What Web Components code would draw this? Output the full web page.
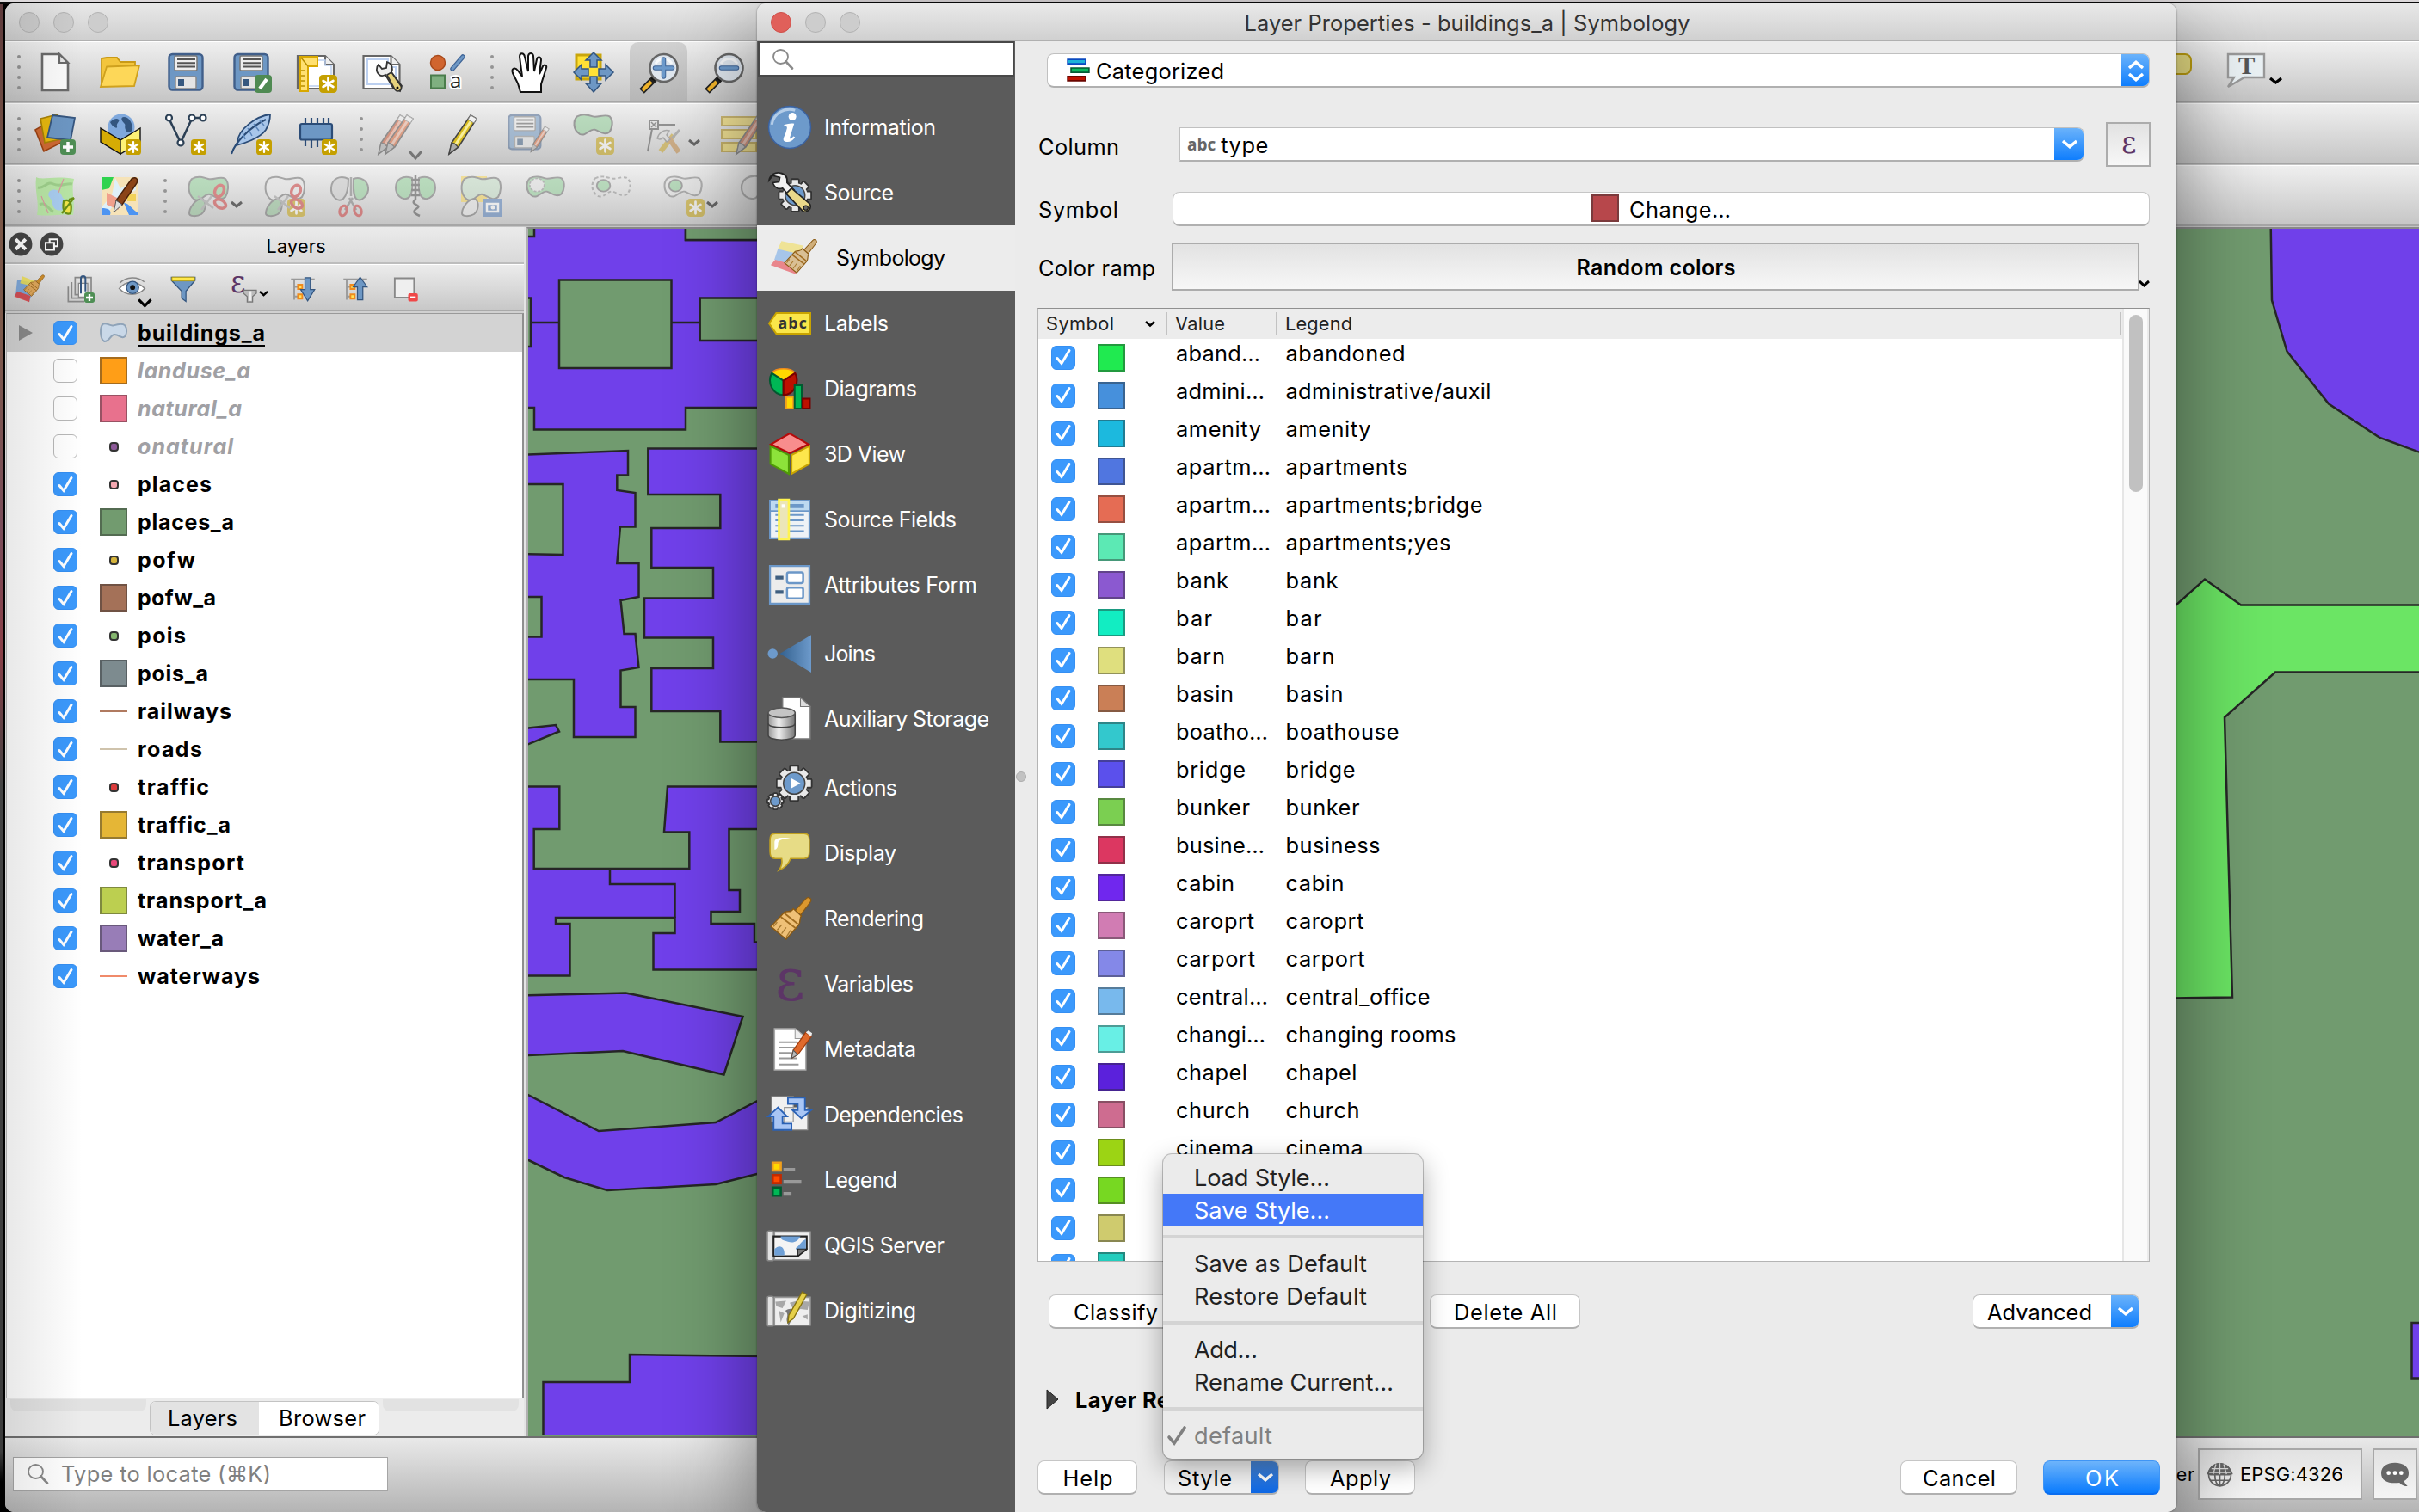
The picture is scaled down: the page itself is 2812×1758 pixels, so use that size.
<!DOCTYPE html>
<html lang="en">
<head>
<meta charset="utf-8">
<title>Layer Properties - buildings_a | Symbology</title>
<style>
html,body{margin:0;width:2812px;height:1758px;overflow:hidden}
body{font-family:Inter,"Noto Sans",sans-serif;font-size:25.4px;color:#000;
background:linear-gradient(#dcd8da 0 2px,#0a0a0a 2px 5px,transparent 5px),linear-gradient(to right,transparent 4px,#000 4px),linear-gradient(#5d3a3c,#7a5646 12%,#7d5a4c 22%,#7b4d5a 35%,#8a4048 43%,#444 52%,#3c3c3c 96%,#000 98%)}
</style>
</head>
<body>
<qgis-window></qgis-window>
<properties-dialog></properties-dialog>
<script>
const BLOB='M5 4C12 0 18 2 24 4S38 0 44 4C49 10 47 20 44 25 38 31 32 24 26 22S16 32 8 28C0 22 0 10 5 4Z';
const star=(s=18)=>`<g transform="translate(${48-s} ${48-s}) scale(${s/20})"><rect width="20" height="20" rx="4" fill="#c5a000"/><path d="M10 3.5v13M4.4 6.7l11.2 6.6M15.6 6.7 4.4 13.300" stroke="#fff" stroke-width="2.600" stroke-linecap="round"/></g>`;
const plus='<rect x="30" y="30" width="18" height="18" rx="4" fill="#4f8f55"/><path d="M39 33v12M33 39h12" stroke="#fff" stroke-width="3.500"/>';
const floppy=`<rect x="4.500" y="3" width="39" height="41.500" rx="4" fill="#6d97c4" stroke="#415f8a" stroke-width="2.400"/><rect x="11" y="5" width="26" height="17" rx="1.500" fill="#efefef" stroke="#777" stroke-width="1.500"/><path d="M14 9h21M14 13.300h21M14 17.500h21" stroke="#555" stroke-width="2"/><rect x="12" y="29" width="24" height="14" rx="1.500" fill="#e4e4e4" stroke="#888" stroke-width="1.500"/><path d="M15 32h7v8h-7z" fill="#37587f"/>`;
const pencil=(a,b)=>`<path d="M33 2l7 4-21 33-11 8 3-13z" fill="${a}" stroke="#444" stroke-width="1.600"/><path d="M36.500 4 15 37" stroke="${b}" stroke-width="3"/><path d="M11 34l3.500 1 4 4L8 47z" fill="#aaa" stroke="#444" stroke-width="1.200"/><path d="M33 2l7 4-3 5-7-4z" fill="#f2f2f2" stroke="#888"/>`;
const lens=`<path d="M19 31 4 46" stroke="#222" stroke-width="8"/><path d="M15 35 5 45" stroke="#f0b32a" stroke-width="4.500"/><path d="M21 27l-4 6" stroke="#111" stroke-width="5"/><circle cx="29.500" cy="19" r="16" fill="#dfe6ee" stroke="#666" stroke-width="2.600"/><path d="M20 14a11 11 0 0 1 19 0" stroke="#fff" stroke-width="3" fill="none" opacity=".7"/>`;
const wrench=`<path d="M20 15c-3 3-3 9 1 12 2 1.500 5 1 7 0l9 15 8 4 2-6-12-16c2-4 1-10-5-12l-1 7-5 1z" fill="#eee" stroke="#333" stroke-width="1.800"/><path d="M30 27l5-3 11 16c2 5-4 8-7 4z" fill="#e6d27c" stroke="#333" stroke-width="1.600"/><circle cx="42" cy="42" r="1.500"/>`;
const sciss=`<path d="M12 24l18 14M28 24 16 40" stroke="#999" stroke-width="2.500"/><ellipse cx="37" cy="18" rx="5" ry="7" transform="rotate(25 37 18)" fill="none" stroke="#c33" stroke-width="3.500"/><ellipse cx="38" cy="33" rx="7" ry="4.500" transform="rotate(30 38 33)" fill="none" stroke="#c33" stroke-width="3.500"/>`;
const leaf=f=>`<path d="M17 27c6 4 4 14-1 18-5 3-14 3-14-1 0-6 7-17 15-17z" fill="${f}" stroke="#666" stroke-width="2"/>`;
const gear=(cx,cy,r,h)=>{let d='';for(let i=0;i<8;i++)d+=`<rect x="${cx-r*.24}" y="${cy-r}" width="${r*.48}" height="${r*2}" rx="1" transform="rotate(${i*45} ${cx} ${cy})"/>`;return `<g fill="#e8e8e8" stroke="#333" stroke-width="1.600">${d}</g><circle cx="${cx}" cy="${cy}" r="${r*.76}" fill="#e8e8e8"/><circle cx="${cx}" cy="${cy}" r="${h}" fill="#6d9acb" stroke="#444" stroke-width="1.500"/>`};
const brush=(a,b)=>`<path d="M46 1c3 1 2 4 0 6L36 20l-6-5L42 2c1-1 3-2 4-1z" fill="${b}" stroke="#8a5a14" stroke-width="1.200"/><path d="M18 17c5-2 7 1 10-4l9 8c-3 3 0 6-3 10L20 47 3 33z" fill="${a}" stroke="#8a5a14" stroke-width="1.400"/><path d="M14 22l17 13M18 18l15 12" stroke="#a06c20" stroke-width="1.800"/><path d="M10 28 6 33M15 31l-5 6M20 34l-5 7M25 37l-5 8" stroke="#a97b33" stroke-width="1.300"/>`;
const map='<path d="M7 9h40v31H7z" fill="#eee" stroke="#999" stroke-width="1.500"/><rect x="-1" y="8" width="7" height="33" rx="2" fill="#e2e2e2" stroke="#888" stroke-width="1.500"/>';
const swoosh='<path d="M3 8 35 14 24 46 0 36z" fill="#6f9fd8"/><path d="M12 2 38 12 34 20 8 14z" fill="#f0e050"/><path d="M3 28 26 36 24 47 -2 37z" fill="#e04040"/>';
const tree='<path d="M2 6h44M8 6v38M8 20h10M8 38h10" stroke="#999" stroke-width="3" fill="none"/><path d="M15 16h8v8h-8zM15 34h8v8h-8z" fill="#ffe45c" stroke="#f08a1c" stroke-width="3"/>';
const ICONS={
newdoc:'<path d="M9 3h20l10 10v32H9z" fill="#fcfcfc" stroke="#6b6b6b" stroke-width="2.600"/><path d="M29 3v10h10z" fill="#e8e8e8" stroke="#6b6b6b" stroke-width="2.200"/>',
open:'<path d="M2 40V8l6-1h12l4 5h17v9H8z" fill="#f3c53c" stroke="#c99a17" stroke-width="1.800"/><path d="M8 17.500 46 16l-6 24-39 1z" fill="#fdd758" stroke="#cfa11e" stroke-width="1.800"/>',
save:floppy,
saveas:floppy+'<rect x="28" y="27" width="20" height="21" rx="4" fill="#4f8a52"/><path d="M42 32 34 43" stroke="#fff" stroke-width="4"/>',
newlayout:'<path d="M2 5h32l10 10v28H2z" fill="#fff" stroke="#666" stroke-width="2.200"/><path d="M34 5v10h10" fill="#eee" stroke="#666" stroke-width="2"/><path d="M8 10h26v6h7v24H8z" fill="none" stroke="#bcd0f0" stroke-width="1.500"/><path d="M5 6h20v11H14v29H5z" fill="#ffe070" stroke="#d8a800" stroke-width="2"/><path d="M6 7l8 10M6 22h4M6 28h4M6 34h4M6 40h4" stroke="#b88e00" stroke-width="1.500"/>'+star(21),
layoutmgr:'<path d="M2.500 5h32l10 10v28h-42z" fill="#fff" stroke="#666" stroke-width="2.200"/><path d="M34.500 5v10h10" fill="#eee" stroke="#666" stroke-width="2"/><path d="M7 9h24v9h9v20H7z" fill="none" stroke="#bcd0f0" stroke-width="2"/>'+wrench,
stylemgr:'<ellipse cx="13" cy="13" rx="8.500" ry="8.500" fill="#d0652f" stroke="#a84a1c" stroke-width="1.500"/><path d="M42 6 30 20" stroke="#3f6496" stroke-width="5.500" stroke-linecap="round"/><path d="M42 6 30 20" stroke="#6d97c4" stroke-width="3" stroke-linecap="round"/><path d="M5 27.500h16v15H5z" fill="#7fb080" stroke="#4a7d4c" stroke-width="2"/><text x="27" y="42" font-family="Open Sans" font-size="24" fill="#222" stroke="#fff" stroke-width="4" paint-order="stroke">a</text>',
hand:'<path d="M15 47 12 37 6 25c-2-6 3-7 6-3l5 7-3-23c0-5 5-5 6 0l4 17V5c1-4 5-4 6 0l1 18 3-14c1-4 5-3 5 1l-2 16 4-9c2-3 5-1 4 2l-6 19v9z" fill="#fff" stroke="#111" stroke-width="2"/>',
pansel:'<path d="M4 4h28v28H4z" fill="#ffe135" stroke="#c9a60c" stroke-width="3"/><g fill="#6d97c4" stroke="#33557f" stroke-width="1.500"><path d="M24 1l9 9h-5v8h-8v-8h-5z"/><path d="M24 47l9-10h-5v-8h-8v8h-5z"/><path d="M1 24l9-9v5h8v8h-8v5z"/><path d="M47 24l-9-9v5h-8v8h8v5z"/></g>',
zoomin:lens+'<path d="M29.500 9v20M19.500 19h20" stroke="#3f6496" stroke-width="5.500" stroke-linecap="round"/><path d="M29.500 9v20M19.500 19h20" stroke="#6d9acb" stroke-width="3.500" stroke-linecap="round"/>',
zoomout:lens+'<path d="M20.500 19h18" stroke="#3f6496" stroke-width="5.500" stroke-linecap="round"/><path d="M20.500 19h18" stroke="#6d9acb" stroke-width="3.500" stroke-linecap="round"/>',
addlayer:'<path d="M1 19 20 8l15 24-24 12z" fill="#cf6a34" stroke="#9c4314" stroke-width="1.600"/><path d="M7 6 27 1l8 28-23 5z" fill="#e6b80e" stroke="#a98205" stroke-width="1.600"/><path d="M21 2 47 5 42 31 15 28z" fill="#6d97c4" stroke="#36567f" stroke-width="1.800"/>'+plus,
gpkg:'<circle cx="25" cy="16" r="15.500" fill="#7fa8dc"/><path d="M12 10c4-4 8-5 10-3s-3 4-2 8-6 0-8-5zM28 4c6 0 9 6 10 12s-6 8-8 3 1-5-2-8-4-7 0-7z" fill="#33557f"/><path d="M1 17 24 31v16L1 33z" fill="#d6ac04" stroke="#111" stroke-width="1.400"/><path d="M47 17 24 31v16l23-14z" fill="#fdf276" stroke="#111" stroke-width="1.400"/>'+star(),
shp:'<path d="M4.500 6 18 34 31 6M31 5h13" stroke="#2c4055" stroke-width="2.600" fill="none"/><g fill="#fff" stroke="#2c4055" stroke-width="2.200"><circle cx="4.500" cy="5" r="3.500"/><circle cx="18" cy="34" r="3.500"/><circle cx="31" cy="5" r="3.500"/><circle cx="44" cy="5" r="3.500"/></g>'+star(),
feather:'<path d="M46 1C30 3 9 18 8 33l-1 4c8-2 27-8 34-18 4-7 5-14 5-18z" fill="#a8c6ea" stroke="#2b4c77" stroke-width="1.800"/><path d="M1 47C5 34 22 16 41 7" fill="none" stroke="#2b4c77" stroke-width="2.200"/><path d="M14 22l3 8M20 17l5 9M27 12l6 8M34 8l5 6" stroke="#5c86ba" stroke-width="1.500"/>'+star(),
chip:'<path d="M11 5v7M18 5v7M25 5v7M32 5v7M11 30v8M18 30v10M25 30v9M38 5v7" stroke="#2b4c77" stroke-width="2.200"/><rect x="5" y="12" width="37" height="18.500" rx="2" fill="#6d97c4" stroke="#2b4c77" stroke-width="2.200"/>'+star(),
pencils:'<g transform="translate(-6 0)">'+pencil('#c9502a','#eda58c')+'</g><g transform="translate(2 0)">'+pencil('#d95f2e','#f0b59c')+'</g><path d="M38 44l7 8 7-8" fill="none" stroke="#222" stroke-width="3"/>',
pencil:pencil('#d8bc22','#f7ee9a'),
savefeat:'<g transform="translate(-3 -1) scale(.95)">'+floppy+'</g><g transform="translate(22 14) scale(.65)">'+pencil('#d95f2e','#f0b59c')+'</g>',
addfeat:`<g transform="scale(.97 .85)"><path d="${BLOB}" fill="#8ccf94" stroke="#555" stroke-width="2.200"/></g>`+star(21),
vertex:'<path d="M5 8h10v10H5zM15 13h20M8 18 3 44" fill="none" stroke="#444" stroke-width="2"/><path d="M7 10l6 6M13 10l-6 6" stroke="#444" stroke-width="1.500"/><path d="M33 25 18 44" stroke="#c9a21c" stroke-width="6"/><path d="M40 19 31 29" stroke="#888" stroke-width="3"/><path d="M27 28 39 45" stroke="#c2843a" stroke-width="6"/><path d="M14 29c2-7 8-11 14-9l-3 5 4 5-4 3-4-5c-2 2-4 3-7 1z" fill="#ddd" stroke="#777" stroke-width="1.500"/>',
attrs:'<path d="M0 4h40v10H0zM0 19h40v10H0zM0 34h40v10H0z" fill="#ffe14a" stroke="#b48c00" stroke-width="2"/><g transform="translate(9 0)">'+pencil('#c9502a','#eda58c')+'</g>',
map1:'<path d="M2 2c8 4 20-2 44 2-4 14 2 26-1 42-14-2-24 2-42 0 3-16-3-26-1-44z" fill="#b9e6a6"/><path d="M18 18c6-4 12 0 14 6s6 2 8 8-8 10-14 8-4-10-8-14 0-8 0-8z" fill="#a9cdf0"/><path d="M4 14c8 2 10-8 18-4s16-2 22 0M6 34c8-4 10 6 16 8" stroke="#9fd08c" stroke-width="3" fill="none"/><path d="M8 24l8 20M34 4l-6 16" stroke="#d99aa0" stroke-width="1.200"/><path d="M32 44 46 26M46 26l-6 2M34 30c8-4 10 4 8 14-6 2-10-2-8-14z" stroke="#6a8f14" stroke-width="2.200" fill="#f3e64a"/>',
map2:'<path d="M2 2h43v44H2z" fill="#f6e3b8"/><path d="M2 2h14l-5 13-9 2z" fill="#2fd34f"/><path d="M18 3l6 12 18-10v12L20 28 8 46H2v-9l12-14z" fill="#dff0f8"/><path d="M2 38c8 0 12 2 10 8H2zM28 32c6 0 10 8 17 12v2H34z" fill="#4d94f2"/><path d="M8 20l12 6 2 14-14-6z" fill="#f0a08c"/><path d="M32 22h10v8H32z" fill="#f2d158"/><path d="M37 4c5-3 8 0 6 5L26 34l-7-5z" fill="#8b4418" stroke="#4c220a" stroke-width="1.500"/><path d="M19 29l7 5-10 9z" fill="#ddd" stroke="#555"/>',
split1:`<path d="${BLOB}" fill="#8ccf94" stroke="#666" stroke-width="2"/>`+leaf('#8cc090')+sciss,
split2:`<path d="${BLOB}" fill="#e8e8e8" stroke="#666" stroke-width="2"/>`+leaf('#8cc090')+star(21)+sciss,
split3:'<path d="M22 4C12-1 3 4 2 14s8 18 14 13c4-4 6-10 6-23z" fill="#ccc" stroke="#666" stroke-width="2"/><path d="M28 4c8-3 16 2 17 10s-8 18-14 13c-4-4-3-14-3-23z" fill="#8ccf94" stroke="#666" stroke-width="2"/><path d="M25 2v22M27 26l-9 14M23 26l8 14" stroke="#777" stroke-width="2.500"/><ellipse cx="16" cy="41" rx="4" ry="6" transform="rotate(18 16 41)" fill="none" stroke="#c33" stroke-width="3"/><ellipse cx="33" cy="41" rx="4" ry="6" transform="rotate(-18 33 41)" fill="none" stroke="#c33" stroke-width="3"/>',
merge:'<path d="M20 3C9-1 1 5 1 14s7 14 12 13c7-1 8-12 7-24zM28 3c11-4 19 2 19 11s-7 14-12 13c-7-1-8-12-7-24z" fill="#8ccf94" stroke="#666" stroke-width="2"/><path d="M24 0v28c-8 6 8 6 2 10s-4 6 3 9M19 5h10M19 11h10M19 17h10M19 23h10" stroke="#444" stroke-width="2.500" fill="none"/>',
mergeattr:`<path d="M1 1h30v30H1z" fill="#f8d44a"/><path d="${BLOB}" fill="#c3dfc5" stroke="#666" stroke-width="2"/>`+leaf('#e8e8e8')+'<rect x="27" y="27" width="21" height="21" fill="#4a78b8"/><path d="M31 33h13v9H31z" fill="none" stroke="#fff" stroke-width="2.500"/><circle cx="38" cy="37" r="2.500" fill="#fff"/>',
reshape:`<g transform="scale(.95 .85)"><path d="${BLOB}" fill="#8ccf94" stroke="#666" stroke-width="2.200"/><circle cx="14" cy="13" r="9" fill="#e4e4e4" stroke="#888" stroke-width="2" stroke-dasharray="3 2"/></g>`,
reshape2:`<g transform="scale(.97 .85)"><path d="${BLOB}" fill="none" stroke="#888" stroke-width="2.200" stroke-dasharray="4 3"/><circle cx="15" cy="14" r="8" fill="#8ccf94" stroke="#666" stroke-width="2"/></g>`,
reshape3:`<g transform="scale(.95 .85)"><path d="${BLOB}" fill="#e4e4e4" stroke="#777" stroke-width="2.200"/><circle cx="15" cy="14" r="8" fill="#8ccf94" stroke="#666" stroke-width="2"/></g>`+star(21),
oval:'<path d="M22 1C10-1 2 5 2 14s8 14 14 13c7-1 8-12 6-26z" fill="#ddd" stroke="#777" stroke-width="2.200"/>',
style:swoosh.replace(/<path/g,'<path opacity=".85"')+'<g transform="translate(12 -1) scale(.8)">'+brush('#e0a85c','#d08f2c')+'</g>',
addgroup:'<path d="M14 4h28v30H14zM8 12v28h30" fill="none" stroke="#888" stroke-width="2.500"/><path d="M2 20v26h28" fill="none" stroke="#888" stroke-width="2.500"/><path d="M20 14h16v24H20z" fill="#f2f2f2" stroke="#888" stroke-width="2"/><path d="M24 32V6c0-6 8-6 8 0v22" fill="none" stroke="#33557f" stroke-width="3"/>'+plus,
eye:'<path d="M1 24C12 10 32 8 47 24 34 38 14 38 1 24z" fill="#fff" stroke="#888" stroke-width="2.500"/><path d="M2 14C14 2 34 2 46 12" fill="none" stroke="#888" stroke-width="2.500"/><circle cx="25" cy="22" r="11" fill="#6d97c4" stroke="#33557f" stroke-width="2"/><circle cx="25" cy="22" r="4.500" fill="#111"/><path d="M36 44l11 11 11-11" fill="none" stroke="#000" stroke-width="5"/>',
filter:'<path d="M2 2h44v6L29 28v19l-8-6V28L2 8z" fill="#6d97c4" stroke="#33557f" stroke-width="2"/><path d="M3 2h42v7H3z" fill="#ffe84a" stroke="#b59d10" stroke-width="1.500"/>',
expr:'<text x="0" y="30" font-family="DejaVu Serif" font-size="56" fill="#5c3566" textLength="28" lengthAdjust="spacingAndGlyphs">ε</text><path d="M24 26h24v6l-7 6v10h-10V38l-7-6z" fill="#bbb" stroke="#777" stroke-width="2"/><path d="M34 28h5v18h-5z" fill="#eee"/>',
expand:tree+'<path d="M28 3h10v22h8L33 46 20 25h8z" fill="#6d97c4" stroke="#33557f" stroke-width="2"/>',
collapse:tree+'<path d="M28 44h10V20h8L33 2 20 20h8z" fill="#6d97c4" stroke="#33557f" stroke-width="2"/>',
remove:'<path d="M3 4h36v36H3z" fill="#efefef" stroke="#888" stroke-width="3"/><rect x="28" y="32" width="18" height="15" rx="3" fill="#f04848"/><path d="M32 39.500h10" stroke="#fff" stroke-width="3.500"/>',
poly:`<g transform="translate(0 5)"><path d="M5 4C12 0 18 8 24 6S40 2 44 6C48 12 47 20 44 25 38 31 34 22 26 22S18 34 8 34C0 30 0 10 5 4Z" fill="#c9d8e8" stroke="#8fa3b8" stroke-width="3"/></g>`,
search:'<ellipse cx="19" cy="18" rx="17" ry="16" fill="none" stroke="#8a8a8a" stroke-width="3.600"/><path d="M31 29 46 45" stroke="#8a8a8a" stroke-width="5.500" stroke-linecap="round"/>',
info:'<circle cx="24" cy="24" r="23.500" fill="#6d9acb" stroke="#3b62a0" stroke-width="1.500"/><path d="M4 21A20 20 0 0 1 30 5" stroke="#b4cde8" stroke-width="3" fill="none"/><circle cx="27" cy="12" r="4.300" fill="#fff"/><path d="M18 21c4-1 8-2 11-1l-5 16c0 2 3 0 4-2l2 1c-3 5-7 6-11 5s-1-6 0-8l2-7c0-3-2-2-4-2z" fill="#fff"/>',
source:gear(30,27,18,11)+'<path d="M1 10C2 4 8 1 13 2c6 1 9 5 8 11l8 8-6 6-7-8c-5 2-9-1-11-6l7-1 1-5-8-2z" fill="#f0f0f0" stroke="#222" stroke-width="1.600"/><path d="M20 25l6-6 20 17c4 5-3 12-8 8z" fill="#ead98a" stroke="#222" stroke-width="1.600"/><circle cx="42" cy="41" r="2.500" fill="#666" stroke="#111"/>',
symbology:'<g opacity=".75"><path d="M10 5 34 10 30 22 6 14z" fill="#f0e07a"/><path d="M6 14 31 20 27 34 2 26z" fill="#8fb8e8"/><path d="M3 26 28 33 26 42 -2 32z" fill="#e8646c"/></g><g transform="translate(11 3) scale(.8)">'+brush('#d9bf94','#cfae7a')+'</g>',
labels:'<path d="M1 24 9 12.500h38v23H9z" fill="#fae64a" stroke="#c9a400" stroke-width="2"/><text x="11" y="29.500" font-size="17" font-weight="700" font-family="Open Sans" fill="#333" textLength="32">abc</text>',
diagrams:'<path d="M17 15 4 6.500C8 0 26 0 30 6.500z" fill="#ffd800" stroke="#f08a1c" stroke-width="1.500"/><path d="M17 15V31C6 31-2 18 4 6.500z" fill="#00b755" stroke="#005a30" stroke-width="2"/><path d="M17 15V31C28 31 36 18 30 6.500z" fill="#bd1000" stroke="#700" stroke-width="2"/><path d="M20 33h8v13h-8z" fill="#ffd800" stroke="#f0a01c" stroke-width="2"/><path d="M29.500 20h8v26h-8z" fill="#00b755" stroke="#005a30" stroke-width="2"/><path d="M38.500 35h8v11h-8z" fill="#bd1000" stroke="#700" stroke-width="2"/>',
view3d:'<path d="M24 1 45 13 24 23 3 13z" fill="#f88d8d" stroke="#b50a0a" stroke-width="2"/><path d="M2.500 15 23 25v21L2.500 35z" fill="#8de33a" stroke="#4f9a08" stroke-width="2"/><path d="M46 15 26 25v21l20-11z" fill="#fde74c" stroke="#c9a400" stroke-width="2"/>',
fields:'<path d="M2 3h44v42H2z" fill="#eef2f6" stroke="#6b97c8" stroke-width="2"/><path d="M3 4h42v10H3z" fill="#bcd9f0"/><path d="M8 9h32" stroke="#6b97c8" stroke-width="4.500"/><path d="M2 14.500h44M8 19h32M8 25h32M8 31h32M8 37h32" stroke="#6b97c8" stroke-width="1.800"/><path d="M12 2h11v44H12z" fill="#ece6b8" stroke="#fff450" stroke-width="2.500"/><path d="M15 7h4v4h-4z" fill="#fff"/>',
form:'<path d="M2 3h44v42H2z" fill="#ececec" stroke="#6b97c8" stroke-width="2.200"/><path d="M8 16h9M8 32h9" stroke="#3f5f80" stroke-width="4"/><rect x="21" y="10" width="18" height="12" rx="2" fill="#fff" stroke="#6b97c8" stroke-width="2.400"/><rect x="21" y="27" width="18" height="12" rx="2" fill="#fff" stroke="#6b97c8" stroke-width="2.400"/>',
joins:'<defs><linearGradient id="g"><stop stop-color="#33618f"/><stop offset="1" stop-color="#6d9acb"/></linearGradient></defs><circle cx="5" cy="24" r="5.500" fill="#6d9acb"/><path d="M13 24 48 3v42z" fill="url(#g)"/>',
aux:'<path d="M16 0h20l11 10v36H16z" fill="#fff" stroke="#777" stroke-width="1.500"/><path d="M36 0v10h11z" fill="#ddd" stroke="#777"/><defs><linearGradient id="c"><stop stop-color="#999"/><stop offset=".4" stop-color="#eee"/><stop offset="1" stop-color="#777"/></linearGradient></defs><path d="M0 17v25c0 7 30 7 30 0V17z" fill="url(#c)" stroke="#444" stroke-width="1.500"/><path d="M0 29c0 6 30 6 30 0" fill="none" stroke="#444" stroke-width="1.500"/><ellipse cx="15" cy="17" rx="15" ry="5.500" fill="#c4c4c4" stroke="#555" stroke-width="1.500"/>',
actions:gear(29,19,19.500,12)+'<path d="M25 13v12l11-6z" fill="#fff"/>'+gear(8,39,9,5.500),
display:'<path d="M8 2h32c5 0 6 3 6 8v12c0 5-1 8-6 8H25c-3 8-8 11-13 13 3-4 4-8 3-13H8c-5 0-6-3-6-8V10c0-5 1-8 6-8z" fill="#e7dc86" stroke="#c0a020" stroke-width="1.600"/><path d="M7 20V12c0-4 3-6 18-5-8 1-14 2-14 6s-1 7-4 7z" fill="#fff"/>',
rendering:brush('#efc077','#dc982e'),
variables:'<text x="8" y="42" font-family="DejaVu Serif" font-size="67" fill="#5c3566" textLength="33" lengthAdjust="spacingAndGlyphs">ε</text>',
metadata:'<path d="M7 1h23l12 10v36H7z" fill="#fff" stroke="#aaa" stroke-width="1.500"/><path d="M30 1v11h12" fill="#eee" stroke="#999"/><path d="M12 16h20M12 22h18M12 28h15M12 34h20M12 41h22" stroke="#999" stroke-width="2"/><path d="M42 5l6 5-15 20-7 4 2-9z" fill="#e06a2c" stroke="#a03c0c" stroke-width="1.200"/><path d="M28 25l5 5-7 4z" fill="#bbb" stroke="#555"/><path d="M42 5l6 5 1-4-4-3z" fill="#eee"/>',
deps:'<path d="M4 4h24v28H4zM18 16h26v25H18z" fill="#f0f0f0" fill-rule="nonzero" stroke="#999" stroke-width="1.200"/><path d="M0 26 11 16l10 10h-5v8h10v7H6V26z" fill="#a9c6f5" stroke="#2b62b5" stroke-width="1.800"/><path d="M22 5h19v14h7L37 28 27 19h6v-7H22z" fill="#a9c6f5" stroke="#2b62b5" stroke-width="1.800"/>',
legend:'<path d="M5 4.500h9v9H5z" fill="#ffd800" stroke="#f0a01c" stroke-width="2.500"/><path d="M5 18.500h9v9H5z" fill="#ff4a00" stroke="#c22a00" stroke-width="2.500"/><path d="M5 32.500h9v9H5z" fill="#00b755" stroke="#005a30" stroke-width="2.500"/><path d="M17 12.500h13M17 26h20M17 39.500h9" stroke="#999" stroke-width="4"/>',
server:map+'<path d="M6 14h37v14l-10 8H6z" fill="#f4f4f4" stroke="#222" stroke-width="2"/><path d="M14 14h22c-3 6-8 8-14 6s-8-2-8-6zM7 28c6-6 12-2 11 7H7zM42 17c-6 3-6 6-10 9s2 5 10 2z" fill="#6fa0d6"/><path d="M33 36l10-8h-10z" fill="#777" stroke="#222"/>',
digit:map+'<path d="M8 14l12-1-4 8-7-2zM12 24l6 3-4 10zM24 15l8-2 14 1-2 9-8-1-6 4zM38 30l6-2v6z" fill="#a8a8a8"/><path d="M19 24c6-4 12-2 10 4l-6 12c-6-8 2-10-4-16z" fill="#777"/><path d="M38 3l5 3-15 27-6 4 1-8z" fill="#e6d04a" stroke="#857210" stroke-width="1.300"/>',
cat:'<path d="M2 2h37v9H2z" fill="#1cb3d8" stroke="#0a49c0" stroke-width="3"/><path d="M9 19.500h37v9H9z" fill="#0bb85c" stroke="#045a34" stroke-width="3"/><path d="M2 37h37v9H2z" fill="#bd1000" stroke="#6a0600" stroke-width="3"/>',
note:'<path d="M3 3h42v27H22L3 41l7-11H3z" fill="#eaf1f4" stroke="#999" stroke-width="2.400"/><text x="15" y="26" font-family="Liberation Serif" font-weight="bold" font-size="29" fill="#555">T</text>',
globe:'<g fill="none" stroke="#666" stroke-width="2.600"><circle cx="24" cy="26" r="20"/><ellipse cx="24" cy="26" rx="9" ry="20"/><path d="M24 6v40M6 36h36M1 24h46M8 14h32"/></g><path d="M1 24C6 8 16 5 24 5s18 3 23 19l-6 3H7z" fill="#666"/><path d="M9 15h30M5 22h38M17 7l-5 18M31 7l5 18M24 5v20" stroke="#ddd" stroke-width="2"/>',
bubble:'<path d="M24 4c13 0 24 6 24 18 0 7-3 11-8 14 1 4 3 6 6 9-7 0-11-2-14-6C12 41 0 36 0 22 0 10 11 4 24 4z" fill="#666"/><g fill="#fff"><circle cx="13" cy="22" r="3.500"/><circle cx="24" cy="22" r="3.500"/><circle cx="35" cy="22" r="3.500"/></g>',
close:'<circle cx="24" cy="24" r="23" fill="#444"/><path d="M14 14l20 20M34 14 14 34" stroke="#fff" stroke-width="7"/>',
float:'<circle cx="24" cy="24" r="23" fill="#444"/><path d="M20 20v-6h16v14h-6M12 21h17v14H12z" fill="none" stroke="#fff" stroke-width="3.500"/>'
};
class Base extends HTMLElement{
  constructor(){super();this.attachShadow({mode:'open'})}
  connectedCallback(){if(this.done)return;this.done=true;this.shadowRoot.innerHTML=`<style>*{box-sizing:border-box}${this.css()}</style>${this.html()}`}
  css(){return ''} html(){return '<slot></slot>'}
  at(n,d=''){return this.getAttribute(n)??d}
}
const define=(n,c)=>customElements.define(n,c);

/* Single-line text whose tracking is tuned to a given ink width */
const fitted=[];
define('ui-text',class extends Base{
  css(){return ':host{display:inline-block;white-space:nowrap;flex:none;margin-left:1px}'}
  connectedCallback(){super.connectedCallback();fitted.push(this)}
  fit(){const w=+this.at('w',0);if(!w)return;const n=this.textContent.length;
    this.style.letterSpacing='0px';const nat=this.getBoundingClientRect().width;
    this.style.letterSpacing=((w+3-nat)/Math.max(1,n-1)).toFixed(3)+'px';
    this.style.width=(w+3)+'px'}
});
define('ui-icon',class extends Base{
  css(){const s=this.at('size','48');return `:host{display:block;flex:none;width:${s}px;height:${s}px}:host([off]){opacity:.5}svg{display:block;width:100%;height:100%;overflow:visible}`}
  html(){return `<svg viewBox="0 0 48 48" fill-rule="evenodd">${ICONS[this.at('name')]}</svg>`}
});
define('ui-chevron',class extends Base{
  css(){return ':host{display:block;flex:none}svg{display:block;overflow:visible}'}
  html(){return `<svg width="${this.at('w','12')}" height="${this.at('h','6')}" viewBox="0 0 12 6" preserveAspectRatio="none"><path d="M0 0l6 5 6-5" fill="none" stroke="${this.at('color','#000')}" stroke-width="${this.at('sw','3')}"/></svg>`}
});
define('traffic-lights',class extends Base{
  css(){return ':host{display:flex;gap:16px}i{width:24px;height:24px;border-radius:50%;background:#cdcdcd;border:1.5px solid #b2b2b2}i.r{background:#e0605a;border-color:#cf4f49}'}
  html(){return `<i class="${this.hasAttribute('active')?'r':''}"></i><i></i><i></i>`}
});
define('check-box',class extends Base{
  css(){return ':host{display:block;flex:none;width:28px;height:28px;border-radius:6px;background:#fff;border:1.5px solid #b8b8b8}:host([on]){background:#3b99fc;border-color:#358ff2}svg{display:block;margin:-1.500px}'}
  html(){return this.hasAttribute('on')?'<svg width="28" height="28"><path d="M7 15.500l5 6L21 6.500" fill="none" stroke="#fff" stroke-width="3" stroke-linecap="round"/></svg>':''}
});
define('color-swatch',class extends Base{
  css(){return `:host{display:block;flex:none;width:32px;height:32px;background:${this.at('color')};border:2px solid rgba(40,40,40,.42);background-clip:border-box}`}
});
define('tool-cell',class extends Base{
  css(){return ':host{display:flex;width:76px;height:100%;align-items:center;justify-content:center;flex:none}:host([drop]){width:97px;justify-content:flex-start;padding-left:22px;gap:3px}:host([hot]){width:67px;height:69px;margin:1px 5px 0 4px;background:linear-gradient(#d2d2d2,#b6b6b6);border-radius:10px 10px 0 0}'}
  html(){return `<ui-icon name="${this.at('icon')}" ${this.hasAttribute('off')?'off':''}></ui-icon>${this.hasAttribute('drop')?'<ui-chevron style="margin-top:20px" color="#666"></ui-chevron>':''}`}
});
define('tool-handle',class extends Base{
  css(){return ':host{display:flex;flex-direction:column;gap:8px;width:18px;height:100%;justify-content:center;align-items:flex-end;padding-right:2px;flex:none}i{width:4px;height:4px;border-radius:2px;background:#949494}'}
  html(){return '<i></i><i></i><i></i><i></i>'}
});
define('tool-bar',class extends Base{
  css(){return ':host{display:flex;height:72px;flex:none;align-items:stretch;background:linear-gradient(#fff 0 1px,#efefef 1px,#c6c6c6 69px,#a6a6a6 69px 71px,#c4c4c4 71px)}'}
});
define('layer-row',class extends Base{
  css(){return `:host{display:flex;height:44px;align-items:center;font-weight:700;font-size:25px;flex:none}:host([sel]){background:#d3d3d3}
  .a{width:54px;padding-left:14px}.s{width:32px;margin:0 11px 0 26px;display:flex;justify-content:center;align-items:center}
  .dot{width:11px;height:11px;border-radius:4px;border:2px solid #333}.ln{width:32px;height:2px}
  :host([off]) ui-text{color:#a0a0a4;font-style:italic}:host([sel]) ui-text{border-bottom:2px solid #000;line-height:28px;margin-top:2px}`}
  html(){const k=this.at('kind'),c=this.at('color');
    const s=k=='fill'?`<color-swatch color="${c}"></color-swatch>`:k=='dot'?`<i class="dot" style="background:${c}"></i>`:k=='line'?`<i class="ln" style="background:${c}"></i>`:'<ui-icon name="poly" size="32"></ui-icon>';
    return `<span class="a">${this.hasAttribute('sel')?'<svg width="16" height="18" style="display:block"><path d="M0 0l16 9-16 9z" fill="#8a8a8a"/></svg>':''}</span><check-box ${this.hasAttribute('off')?'':'on'}></check-box><span class="s">${s}</span><ui-text w="${this.at('w')}">${this.at('label')}</ui-text>`}
});
const LAYERS=[['buildings_a',145,'poly',''],['landuse_a',128,'fill','#ff9e17'],['natural_a',118,'fill','#e8718d'],['onatural',108,'dot','#8d5a99'],['places',83,'dot','#f4a7b0'],['places_a',109,'fill','#729b6f'],['pofw',64,'dot','#d5b43c'],['pofw_a',88,'fill','#a47158'],['pois',53,'dot','#85b66f'],['pois_a',79,'fill','#7d8b8f'],['railways',106,'line','#b07a60'],['roads',72,'line','#cfc3ac'],['traffic',80,'dot','#db3c3c'],['traffic_a',105,'fill','#e5b636'],['transport',121,'dot','#e8487a'],['transport_a',147,'fill','#bccf50'],['water_a',97,'fill','#987db7'],['waterways',139,'line','#f08a6a']];
define('layers-panel',class extends Base{
  css(){return `:host{display:flex;flex-direction:column;width:603px;flex:none;background:#ececec}
  header{height:43px;display:grid;grid-template-columns:72px 1fr;align-items:center;background:linear-gradient(#ebebeb,#d9d9d9);border-bottom:2px solid #bdbdbd;font-size:21.500px}
  header>div{display:flex;gap:8px;padding:0 0 1px 4px} header ui-text{justify-self:center;margin-top:2px}
  nav{height:57px;display:flex;align-items:center;background:linear-gradient(#fff 0 1px,#ececec 1px,#c8c8c8 53px,#a9a9a9 53px 55px,#d0d0d0 55px);padding:0 0 0 12px}
  nav ui-icon{margin-right:28px}
  main{height:1262px;background:#fff;border:1px solid #bcbcbc;border-right:2px solid #8e8e8e;border-top:1px solid #999;margin:0 0 0 1px}
  footer{flex:1;display:flex;align-items:center;justify-content:space-between;padding:0 6px}
  footer>i{height:14px;width:158px;background:#e2e2e2;border-radius:0 0 8px 8px;align-self:flex-start;margin-top:1px}
  .tabs{display:flex;width:267px;height:40px;border:1.5px solid #c3c3c3;border-radius:7px;background:#fff;overflow:hidden;margin-top:1px}
  .tabs span{display:flex;align-items:center;justify-content:center;width:126px;background:#e3e3e3;padding-right:6px}.tabs span+span{flex:1;background:#fff;padding:0 0 0 7px}`}
  html(){return `<header><div><ui-icon name="close" size="28"></ui-icon><ui-icon name="float" size="28"></ui-icon></div><ui-text w="66">Layers</ui-text></header>
  <nav><ui-icon name="style" size="32"></ui-icon><ui-icon name="addgroup" size="32"></ui-icon><ui-icon name="eye" size="31" style="margin-right:29px"></ui-icon><ui-icon name="filter" size="30" style="margin-right:40px"></ui-icon><ui-icon name="expr" size="30" style="margin-right:4px"></ui-icon><ui-chevron w="9" h="5" style="margin:12px 26px 0 0" ></ui-chevron><ui-icon name="expand" size="30" style="margin-right:31px"></ui-icon><ui-icon name="collapse" size="30" style="margin-right:29px"></ui-icon><ui-icon name="remove" size="30"></ui-icon></nav>
  <main>${LAYERS.map(([n,w,k,c],i)=>`<layer-row label="${n}" w="${w}" kind="${k}" color="${c}" ${i==0?'sel':''} ${i>0&&i<4?'off':''}></layer-row>`).join('')}</main>
  <footer><i></i><div class="tabs"><span><ui-text w="78">Layers</ui-text></span><span><ui-text w="98">Browser</ui-text></span></div><i></i></footer>`}
});
define('map-canvas',class extends Base{
  css(){return ':host{display:block;flex:1;height:100%;border-left:2px solid #b0b0b0;border-top:2px solid #888;background:#719b6f}svg{display:block}'}
  html(){return `<svg width="2198" height="1403" viewBox="614 266 2198 1403" stroke="#262626" stroke-width="2.500"><g fill="#7040ea">
  <path fill-rule="evenodd" d="M600 260H621 797V279H890V474H797V499.500H621V474H600zM650 325.500V428H780.500V325.500zM813.700 346.500H890V396H813.700zM600 346.500H617V403H600z"/>
  <path d="M617 375H650M780 375H813.700" fill="none"/>
  <path d="M610 262H621V275H610zM797 262H890V279H797z" fill="#719b6f"/>
  <path fill-rule="evenodd" d="M600 529 730 524V552.500H717.300V570L738.500 573V612.500H721L717.300 655H742.500V694L721.500 698 725.500 737H738.500L742.500 776 721.500 779.500V822H738.500V857H667V790H600zM600 563H654.500V645L600 644zM600 694H629.500V740.500H600z"/>
  <path d="M600 848 646 843 650 850.500 600 871z"/>
  <path d="M890 521.500H753.300V575H837.300V614H757.300V660H829V695.500H749V741.500H829V777H757.300V827H837.300V862.500H890z"/>
  <path d="M600 914.500H650.300V964H620.700V1010H801.300V967.500H772L776 914.500H890V964H847.500V1035H860V1060H826.500V1074H877V1095.500H890V1127.500H759.500V1085H784.500V1067H646V1074H662.500V1134.500H600z"/>
  <path d="M709 1010V1028H784.500V1067" fill="none"/>
  <path d="M600 1157.500 727.500 1154.500 863.500 1182 841.500 1249.500 724 1222 600 1227.500z"/>
  <path d="M600 1266 696 1315 832 1305 900 1270V1360L832 1377 706 1384 656 1369 600 1342z"/>
  <path d="M631.500 1680V1607H732V1575L890 1577V1680z"/>
  <path d="M2639.500 250 2641 349 2658.500 408.500 2707 469.500 2766.500 509 2830 532V250z"/>
  <path d="M2803.500 1538H2830V1602.500H2803.500z"/></g>
  <path d="M2500 730 2563 673.500 2605 703.500H2830V781.500H2645L2586 834 2595 1159.500 2500 1161z" fill="#6be564"/></svg>`}
});
define('status-bar',class extends Base{
  css(){return `:host{display:flex;height:88px;flex:none;align-items:center;border-top:2px solid #6f6f6f;background:linear-gradient(#e9e9e9,#b4b4b4);padding-left:9px}
  .loc{width:436px;height:40px;margin-bottom:3px;border:1.5px solid #a5a5a5;background:#fff;display:flex;align-items:center;color:#808080;padding-left:16px;gap:14px}
  .sp{flex:1}.b{height:60px;margin-bottom:3px;border:2px solid #a8a8a8;background:linear-gradient(#e2e2e2,#f5f5f5);display:flex;align-items:center;justify-content:center;font-size:22px;gap:7px}`}
  html(){return `<div class="loc"><ui-icon name="search" size="24"></ui-icon><ui-text w="241">Type to locate (⌘K)</ui-text></div><span class="sp"></span>
  <ui-text w="72" style="font-size:21.500px;margin:0 0 2px">Render</ui-text>
  <div class="b" style="width:191px;margin-left:4px;justify-content:flex-start;padding-left:8px"><ui-icon name="globe" size="31"></ui-icon><ui-text w="117">EPSG:4326</ui-text></div><div class="b" style="width:52px;margin:0 2px 3px 12px"><ui-icon name="bubble" size="32"></ui-icon></div>`}
});
define('qgis-window',class extends Base{
  css(){return `:host{display:flex;flex-direction:column;margin:4px 0 0 6px;width:2806px;height:1754px;border-radius:10px 0 0 10px;overflow:hidden;background:#ececec;position:relative}
  .title{height:44px;flex:none;background:linear-gradient(#e8e8e8,#cfcfcf);border-bottom:1px solid #b0b0b0;display:flex;align-items:center;padding-left:16px}
  .body{display:flex;flex:1;gap:3px;min-height:0;background:#e4e4e4}
  .sp{flex:1} .tag{width:40px;height:25px;border:2px solid #b89a10;background:#e0d67f;border-radius:8px;align-self:flex-start;margin:14px 39px 0 0}
  .shade{position:absolute;inset:0 auto 0 0;width:90px;background:linear-gradient(to right,rgba(0,0,0,.09),transparent);pointer-events:none}`}
  html(){const c=(n,x='')=>`<tool-cell icon="${n}" ${x}></tool-cell>`;return `<div class="title"><traffic-lights></traffic-lights></div>
  <tool-bar><tool-handle style="width:20px"></tool-handle>${['newdoc','open','save','saveas','newlayout','layoutmgr','stylemgr'].map(n=>c(n)).join('')}<tool-handle></tool-handle>${c('hand')+c('pansel')+c('zoomin','hot')+c('zoomout')}<span class="sp"></span><i class="tag"></i><ui-icon name="note" style="align-self:center"></ui-icon><ui-chevron sw="3" style="align-self:center;margin:20px 160px 0 4px" w="13" h="6"></ui-chevron></tool-bar>
  <tool-bar><tool-handle style="width:20px"></tool-handle>${['addlayer','gpkg','shp','feather','chip'].map(n=>c(n)).join('')}<tool-handle></tool-handle>${c('pencils','off')+c('pencil')+c('savefeat','off')+c('addfeat','off')+c('vertex','off drop')+c('attrs','off')}</tool-bar>
  <tool-bar><tool-handle style="width:20px"></tool-handle>${c('map1')+c('map2')}<tool-handle></tool-handle>${c('split1','off drop')}${['split2','split3','merge','mergeattr','reshape','reshape2'].map(n=>c(n,'off')).join('')}${c('reshape3','off drop')+c('oval','off')}</tool-bar>
  <div class="body"><layers-panel></layers-panel><map-canvas></map-canvas></div><status-bar></status-bar><div class="shade"></div>`}
});

define('nav-item',class extends Base{
  css(){return ':host{display:flex;height:76px;align-items:center;color:#fff;padding-left:13px;gap:14px;flex:none;font-size:25px}:host([sel]){background:#ececec;color:#000;padding-left:18px;gap:23px}:host([gap]){margin-top:4px}'}
  html(){return `<ui-icon name="${this.at('icon')}" size="50"></ui-icon><slot></slot>`}
});
const NAV=[['info','Information',127],['source','Source',78],['symbology','Symbology',124,'sel'],['labels','Labels',72],['diagrams','Diagrams',105],['view3d','3D View',92],['fields','Source Fields',151],['form','Attributes Form',175],['joins','Joins',57,'gap'],['aux','Auxiliary Storage',189],['actions','Actions',82,'gap'],['display','Display',81],['rendering','Rendering',113],['variables','Variables',101],['metadata','Metadata',104],['deps','Dependencies',159],['legend','Legend',82],['server','QGIS Server',137],['digit','Digitizing',104]];
define('side-nav',class extends Base{
  css(){return ':host{display:flex;flex-direction:column;width:300px;flex:none;background:#5b5b5b;border-radius:0 0 0 10px}.s{width:298px;height:41px;margin:0 0 21px 1px;background:#fff;border:2px solid #484848;display:flex;align-items:center;padding-left:15px;flex:none}'}
  html(){return `<div class="s"><ui-icon name="search" size="24"></ui-icon></div>${NAV.map(([i,t,w,x=''])=>`<nav-item icon="${i}" ${x}><ui-text w="${w}">${t}</ui-text></nav-item>`).join('')}`}
});
define('push-button',class extends Base{
  css(){return `:host{display:flex;height:40px;width:${this.at('width')}px;align-items:center;justify-content:center;background:#fff;border:1px solid #c6c6c6;border-bottom:2px solid #b0b0b0;border-radius:8px;flex:none;padding-top:1px}:host([primary]){background:linear-gradient(#6db4fb,#0a7bfd);color:#fff;border-color:#3f95f5;border-bottom-color:#0a6df0}`}
});
define('combo-box',class extends Base{
  css(){return `:host{display:flex;height:40px;align-items:center;background:#fff;border:1px solid #c0c0c0;border-bottom:2px solid #b0b0b0;border-radius:8px;flex:none;overflow:hidden}:host([edit]){border-radius:0 8px 8px 0}
  .m{flex:1;display:flex;align-items:center;padding-top:1px}.b{width:${this.at('bw','33')}px;margin:-1px -1px -2px 0;height:40px;background:linear-gradient(#6db4fb,#0a7bfd);display:flex;flex-direction:column;gap:7px;align-items:center;justify-content:center;align-self:flex-start}:host([pressed]){background:#f1f1f1}:host([pressed]) .b{background:linear-gradient(#4a86d4,#0a66e6)}.up{transform:scaleY(-1)}`}
  html(){return `<div class="m"><slot></slot></div><div class="b">${this.hasAttribute('double')?'<ui-chevron class="up" color="#fff" w="16" h="8" sw="2.600"></ui-chevron>':''}<ui-chevron color="#fff" w="16" h="8" sw="2.600"></ui-chevron></div>`}
});
const CATS=[['abandoned',136,'#20ea50','aband…',95],['administrative/auxil',236,'#4690dc','admini…',100],['amenity',96,'#1cb9de'],['apartments',139,'#5076e0','apartm…',107],['apartments;bridge',226,'#e56c54','apartm…',107],['apartments;yes',189,'#5ce9b4','apartm…',107],['bank',58,'#8b59d0'],['bar',39,'#12edc2'],['barn',54,'#dfdf7e'],['basin',64,'#ca7f56'],['boathouse',129,'#33c8cd','boatho…',104],['bridge',78,'#5b50ec'],['bunker',83,'#7bcf51'],['business',107,'#dc3761','busine…',100],['cabin',65,'#7027ee'],['caroprt',88,'#d17cb3'],['carport',89,'#8488e8'],['central_office',165,'#78b9ed','central…',104],['changing rooms',195,'#68efe5','changi…',101],['chapel',80,'#5b21dc'],['church',83,'#ce6c90'],['cinema',87,'#9cd414'],['clinic',70,'#77d822'],['college',80,'#cfcb6e'],['commercial',120,'#22cdbd']];
define('category-row',class extends Base{
  css(){return ':host{display:flex;height:44px;align-items:center;flex:none;padding-left:15px}check-box{margin-right:26px}color-swatch{margin-right:58px}.v{width:127.500px}.v,.l{margin-bottom:11px}'}
  html(){return `<check-box on></check-box><color-swatch color="${this.at('color')}"></color-swatch>`+(this.hasAttribute('bare')?'':`<span class="v"><ui-text w="${this.at('vw')}">${this.at('value')}</ui-text></span><span class="l"><ui-text w="${this.at('lw')}">${this.at('legend')}</ui-text></span>`)}
});
define('category-table',class extends Base{
  css(){return `:host{display:flex;width:1293px;height:1109px;border:1.5px solid #b4b4b4;border-top-color:#909090;background:#fff;overflow:hidden;flex:none}
  .t{flex:1;display:flex;flex-direction:column}.h{height:34.500px;background:#ececec;display:flex;align-items:center;flex:none;font-size:21.800px;color:#222;padding:0 1px 0 8px}
  .h div{display:flex;align-items:center;height:26px;border-right:2px solid #c2c2c2}
  .sb{width:31px;background:#fafafa;border-left:2px solid #e6e6e6;border-right:2px solid #ececec;display:flex;justify-content:center;padding-top:7px}.sb i{width:16px;height:206px;border-radius:8px;background:#c1c1c1}`}
  html(){return `<div class="t"><div class="h"><div style="width:142px"><ui-text w="76">Symbol</ui-text><ui-chevron w="10" h="5.500" style="margin-left:37px"></ui-chevron></div><div style="width:128px;padding-left:8px"><ui-text w="55">Value</ui-text></div><div style="flex:1;padding-left:8px"><ui-text w="75">Legend</ui-text></div></div>
  ${CATS.map(([l,lw,c,v=l,vw=lw],i)=>`<category-row color="${c}" legend="${l}" lw="${lw}" value="${v}" vw="${vw}" ${i>21?'bare':''}></category-row>`).join('')}</div><div class="sb"><i></i></div>`}
});
define('menu-item',class extends Base{
  css(){return ':host{display:flex;height:38px;align-items:center;padding-left:35px;color:#222}:host([hot]){background:#4478f8;color:#fff}:host([off]){color:#808080;padding-left:4px;gap:6px}:host([off]) svg{display:block}'}
  html(){return (this.hasAttribute('off')?'<svg width="25" height="24"><path d="M3 14l6 7L21 3" fill="none" stroke="#808080" stroke-width="3.600" stroke-linecap="round"/></svg>':'')+'<slot></slot>'}
});
define('popup-menu',class extends Base{
  css(){return ':host{display:block;padding:8px 0;background:#ebebeb;border-radius:10px;box-shadow:0 0 0 1px rgba(0,0,0,.22),0 10px 30px rgba(0,0,0,.32);font-size:27.200px}hr{margin:10px 0;height:4px;border:0;background:#d4d4d4}ui-text{margin-top:1px}'}
  html(){return `<menu-item><ui-text w="155">Load Style…</ui-text></menu-item><menu-item hot><ui-text w="155">Save Style…</ui-text></menu-item><hr><menu-item><ui-text w="198">Save as Default</ui-text></menu-item><menu-item><ui-text w="198">Restore Default</ui-text></menu-item><hr><menu-item><ui-text w="71">Add…</ui-text></menu-item><menu-item><ui-text w="229">Rename Current…</ui-text></menu-item><hr><menu-item off><ui-text w="88">default</ui-text></menu-item>`}
});
define('symbology-page',class extends Base{
  css(){return `:host{display:flex;flex:1;flex-direction:column;padding:14px 19px 0 26px;position:relative}
  .row{display:flex;align-items:center;flex:none}.sq{border:2px solid #acacac;background:linear-gradient(#e2e2e2,#f7f7f7);display:flex;align-items:center;justify-content:center}
  .abc{font:700 19px "Open Sans";color:#666;margin:0 5px 0 8px}.grip{position:absolute;left:1px;top:849px;width:12px;height:12px;border-radius:6px;background:#c2c2c2;border:1px solid #adadad}
  popup-menu{position:absolute;left:172px;top:1294px;width:302px}`}
  html(){return `<i class="grip"></i>
  <combo-box double style="width:1282px;margin-left:11px"><ui-icon name="cat" size="27" style="margin:-2px 6px 0 22px"></ui-icon><ui-text w="146">Categorized</ui-text></combo-box>
  <div class="row" style="margin-top:40px;height:52px"><span style="width:165px;padding-top:5px"><ui-text w="91">Column</ui-text></span><combo-box edit bw="35" style="width:1052px"><span class="abc">abc</span><ui-text w="52">type</ui-text></combo-box><span class="sq" style="width:52px;height:52px;margin-left:25px"><ui-icon name="variables" size="25"></ui-icon></span></div>
  <div class="row" style="margin-top:29px"><span style="width:157px"><ui-text w="90">Symbol</ui-text></span><push-button width="1136"><color-swatch color="#b7474b" style="margin:-3px 11px 0 0"></color-swatch><ui-text w="115">Change…</ui-text></push-button></div>
  <div class="row" style="margin-top:19px;height:56px"><span style="width:156px;padding-top:2px"><ui-text w="133">Color ramp</ui-text></span><span class="sq" style="width:1125px;height:56px;font-weight:600;font-size:25px;padding-top:1px"><ui-text w="182">Random colors</ui-text></span><ui-chevron w="11" h="6" style="margin-top:40px"></ui-chevron></div>
  <category-table style="margin-top:20px"></category-table>
  <div class="row" style="margin:38px 24px 0 13px"><push-button width="155"><ui-text w="95">Classify</ui-text></push-button><push-button width="175" style="margin-left:288px"><ui-text w="117">Delete All</ui-text></push-button><span style="flex:1"></span><combo-box style="width:194px"><ui-text w="119" style="margin-left:16px">Advanced</ui-text></combo-box></div>
  <div class="row" style="margin:67px 0 0 10px;height:30px;font-weight:700"><svg width="15" height="24" style="margin-right:18px"><path d="M1 1l13 11L1 23z" fill="#444" stroke="#222"/></svg><ui-text w="107">Layer Re</ui-text></div>
  <div class="row" style="margin-top:56px"><push-button width="116"><ui-text w="55">Help</ui-text></push-button><combo-box pressed style="width:134px;margin-left:31px"><ui-text w="60" style="margin-left:15px">Style</ui-text></combo-box><push-button width="128" style="margin-left:30px"><ui-text w="68">Apply</ui-text></push-button><span style="flex:1"></span><push-button width="136"><ui-text w="82">Cancel</ui-text></push-button><push-button primary width="136" style="margin-left:30px"><ui-text w="36">OK</ui-text></push-button></div>
  <popup-menu></popup-menu>`}
});
define('properties-dialog',class extends Base{
  css(){return `:host{position:absolute;left:880px;top:4px;width:1650px;height:1754px;display:flex;flex-direction:column;background:#ebebeb;border-radius:10px;box-shadow:0 0 2px rgba(0,0,0,.5),0 30px 100px rgba(0,0,0,.46)}
  .t{height:44px;flex:none;border-radius:10px 10px 0 0;background:linear-gradient(#e9e9e9,#d0d0d0);border-bottom:1.500px solid #b0b0b0;display:grid;grid-template-columns:200px 1fr 200px;align-items:center;color:#333}
  .t traffic-lights{margin-left:16px}.t ui-text{justify-self:center;margin-top:1px}.b{display:flex;flex:1;min-height:0}`}
  html(){return `<div class="t"><traffic-lights active></traffic-lights><ui-text w="515">Layer Properties - buildings_a | Symbology</ui-text></div><div class="b"><side-nav></side-nav><symbology-page></symbology-page></div>`}
});
fitted.forEach(t=>t.fit());
</script>
</body>
</html>
